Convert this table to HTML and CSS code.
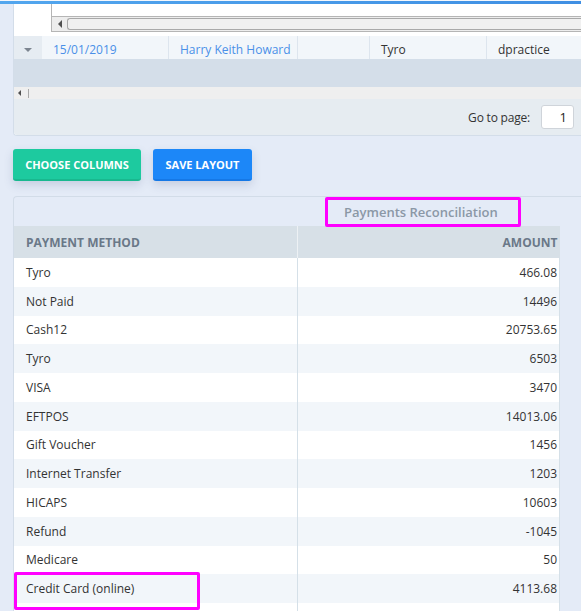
FILE: index.html
```html
<!DOCTYPE html>
<html>
<head>
<meta charset="utf-8">
<link rel="stylesheet" href="styles.css">
</head>
<body>
<div class="topline"></div>
<div class="page">
  <div class="grid-panel">
    <div class="grid-top">
      <div class="grid-top-spacer"></div>
      <div class="grid-top-scroll">
        <div class="scrollbar">
          <span class="arrow-left"></span>
          <span class="thumb"></span>
        </div>
      </div>
    </div>
    <div class="grid-row">
      <div class="cell expander"><span class="caret"></span></div>
      <div class="cell c-date link">15/01/2019</div>
      <div class="cell c-name link">Harry Keith Howard</div>
      <div class="cell c-empty"></div>
      <div class="cell c-method">Tyro</div>
      <div class="cell c-user">dpractice</div>
    </div>
    <div class="grid-band"></div>
    <div class="grid-scroll">
      <span class="arrow-left small"></span>
      <span class="thumb-edge"></span>
    </div>
    <div class="grid-footer">
      <span class="goto-label">Go to page:</span>
      <span class="goto-input">1</span>
    </div>
  </div>

  <div class="actions">
    <button class="btn btn-green">CHOOSE COLUMNS</button>
    <button class="btn btn-blue">SAVE LAYOUT</button>
  </div>

  <div class="report-panel">
    <div class="report-title-row">
      <span class="report-title">Payments Reconciliation</span>
    </div>
    <table class="report">
      <thead>
        <tr><th class="col-method">PAYMENT METHOD</th><th class="col-amount">AMOUNT</th></tr>
      </thead>
      <tbody>
        <tr><td>Tyro</td><td class="num">466.08</td></tr>
        <tr><td>Not Paid</td><td class="num">14496</td></tr>
        <tr><td>Cash12</td><td class="num">20753.65</td></tr>
        <tr><td>Tyro</td><td class="num">6503</td></tr>
        <tr><td>VISA</td><td class="num">3470</td></tr>
        <tr><td>EFTPOS</td><td class="num">14013.06</td></tr>
        <tr><td>Gift Voucher</td><td class="num">1456</td></tr>
        <tr><td>Internet Transfer</td><td class="num">1203</td></tr>
        <tr><td>HICAPS</td><td class="num">10603</td></tr>
        <tr><td>Refund</td><td class="num">-1045</td></tr>
        <tr><td>Medicare</td><td class="num">50</td></tr>
        <tr><td class="highlight">Credit Card (online)</td><td class="num">4113.68</td></tr>
        <tr><td></td><td class="num"></td></tr>
      </tbody>
    </table>
  </div>
</div>
</body>
</html>
```

FILE: styles.css
```css
* { box-sizing: border-box; }
html, body { margin: 0; padding: 0; }
body {
  background: #e4ebf7;
  font-family: "Open Sans", "Liberation Sans", sans-serif;
  color: #333;
  width: 581px;
  height: 611px;
  overflow: hidden;
}
.topline {
  height: 4px;
  border-top: 1px solid #f4f7fc;
  background: linear-gradient(90deg, #52a6ee, #3f8fe3);
}
.page {
  padding-left: 13px;
}

/* ---------- grid panel ---------- */
.grid-panel {
  width: 568px;
  background: #fff;
  border-left: 1px solid #d3dde9;
  border-bottom: 1px solid #d3dde9;
  border-bottom-left-radius: 4px;
  overflow: hidden;
}
.grid-top {
  display: flex;
  height: 28px;
  background: #fff;
}
.grid-top-spacer { width: 37px; }
.grid-top-scroll {
  flex: 1;
  border-left: 1px solid #b5b5b5;
  border-bottom: 1px solid #b5b5b5;
  display: flex;
  flex-direction: column;
  justify-content: flex-end;
}
.scrollbar {
  height: 15px;
  border-top: 1px solid #b5b5b5;
  background: #ededed;
  display: flex;
  align-items: center;
  padding-left: 6px;
}
.arrow-left {
  width: 0; height: 0;
  border-top: 4px solid transparent;
  border-bottom: 4px solid transparent;
  border-right: 4px solid #505050;
}
.thumb {
  flex: 1;
  height: 12px;
  margin-left: 5px;
  border: 1px solid #a9a9a9;
  border-right: none;
  border-radius: 3px 0 0 3px;
  background: #f0f0f0;
}
.grid-row {
  display: flex;
  height: 23px;
  margin-top: 4px;
  font-size: 12px;
  line-height: 19px;
  background: #f2f6fa;
}
.cell {
  border-right: 1px solid #dde5ee;
  padding-left: 11px;
  padding-top: 4px;
  white-space: nowrap;
  overflow: hidden;
}
.expander {
  width: 28px;
  padding: 0;
  background: #e6ecf2;
  border-right: none;
  display: flex;
  align-items: center;
  justify-content: center;
}
.caret {
  width: 0; height: 0;
  border-left: 4px solid transparent;
  border-right: 4px solid transparent;
  border-top: 4px solid #7d8590;
  margin-top: 4px;
}
.link { color: #4a90e8; }
.c-date { width: 127px; }
.c-name { width: 129px; }
.c-empty { width: 72px; }
.c-method { width: 117px; }
.c-user { flex: 1; border-right: none; }
.grid-band {
  height: 28px;
  background: #d4dee9;
}
.grid-scroll {
  height: 12px;
  background: #efefef;
  display: flex;
  align-items: center;
  padding-left: 4px;
}
.arrow-left.small {
  border-top-width: 3px;
  border-bottom-width: 3px;
  border-right-width: 3px;
}
.thumb-edge {
  width: 1px;
  height: 9px;
  background: #a9a9a9;
  margin-left: 7px;
}
.grid-footer {
  height: 36px;
  background: #e6ecf1;
  display: flex;
  align-items: center;
  justify-content: flex-end;
  padding-right: 7px;
  font-size: 12px;
  color: #333;
}
.goto-label { margin-right: 11px; letter-spacing: -0.2px; }
.goto-input {
  width: 33px;
  height: 24px;
  background: #fff;
  border: 1px solid #cfd4da;
  border-radius: 3px;
  text-align: right;
  padding-right: 6px;
  line-height: 22px;
  font-size: 13px;
  color: #222;
}

/* ---------- actions ---------- */
.actions {
  display: flex;
  gap: 12px;
  margin-top: 13px;
}
.btn {
  height: 32px;
  border: none;
  border-radius: 3px;
  color: #fff;
  font-family: "Open Sans", "Liberation Sans", sans-serif;
  font-weight: 700;
  font-size: 11px;
  padding: 0 12px;
  box-shadow: 0 4px 10px rgba(60, 80, 120, 0.18);
}
.btn-green {
  width: 128px;
  background: #1dca9f;
  border-bottom: 2px solid #19b88f;
}
.btn-blue {
  width: 99px;
  background: #1c87f8;
  border-bottom: 2px solid #1578e6;
}

/* ---------- report panel ---------- */
.report-panel {
  margin-top: 15px;
  width: 580px;
  border-top: 1px solid #d2dce8;
  border-left: 1px solid #d2dce8;
  border-top-left-radius: 4px;
}
.report-title-row {
  height: 29px;
  display: flex;
  align-items: center;
  padding-left: 311px;
}
.report-title {
  width: 196px;
  height: 30px;
  margin-top: 1px;
  border: 3px solid #ff00ff;
  border-radius: 2px;
  font-size: 13px;
  font-weight: 600;
  color: #8b98a6;
  line-height: 24px;
  padding-left: 16px;
}
.report {
  width: 546px;
  border-collapse: collapse;
  table-layout: fixed;
  font-size: 12px;
}
.report th {
  height: 32px;
  background: #d7e0e7;
  color: #6a7888;
  font-weight: 700;
  font-size: 12px;
  text-align: left;
  padding: 0 12px;
}
.report th.col-method {
  width: 283px;
  border-right: 1px solid #edf1f4;
}
.report th.col-amount {
  text-align: right;
  padding-right: 2px;
}
.report td {
  height: 28.75px;
  padding: 0 12px;
  color: #333;
  border-right: 1px solid #d5e0e8;
  white-space: nowrap;
}
.report td.num {
  text-align: right;
  padding-right: 2px;
}
.report tbody tr:nth-child(odd) td { background: #fff; }
.report tbody tr:nth-child(even) td { background: #f2f6fa; }
.report td.highlight { position: relative; }
.report td.highlight::after {
  content: "";
  position: absolute;
  left: 0;
  top: -2px;
  width: 180px;
  height: 32px;
  border: 3px solid #ff00ff;
  border-radius: 2px;
}
```
